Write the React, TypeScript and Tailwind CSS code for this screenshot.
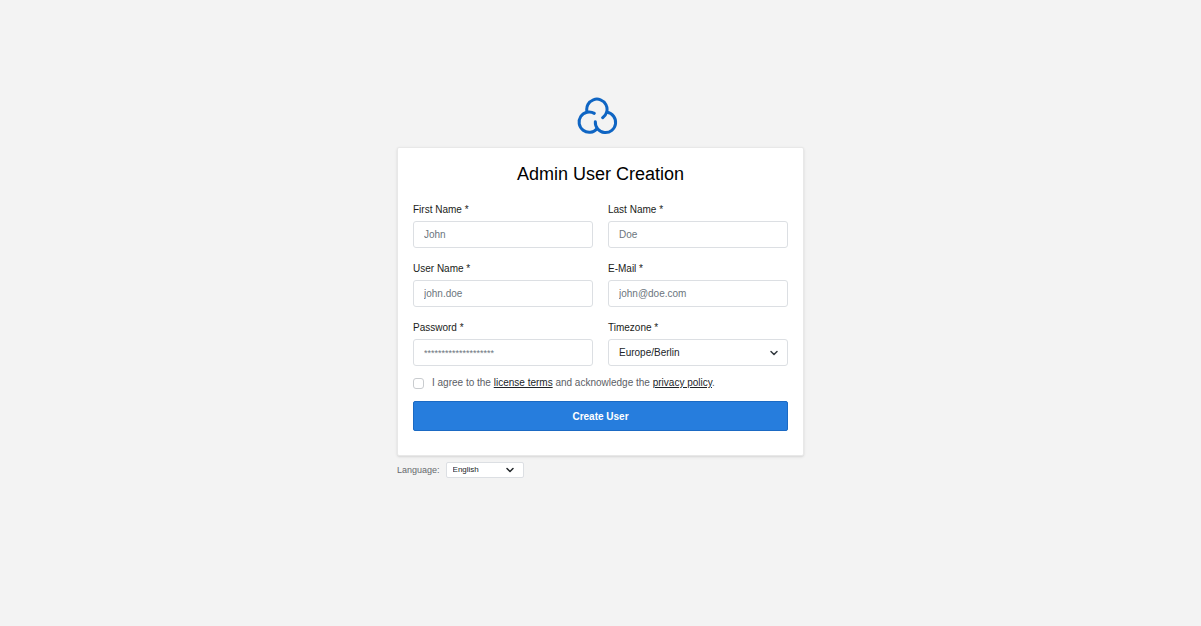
import type { InputHTMLAttributes } from 'react'
import { ChevronDown } from 'lucide-react'

const labelClass = 'mb-[3px] block text-[10px] leading-4 text-[#1a1c20]'
const controlClass =
  'block h-[27px] w-full rounded-[3px] border border-[#dcdfe3] bg-white px-[10px] text-[#212529] placeholder:text-[#6c757d] placeholder:opacity-100'

function Logo() {
  return (
    <svg viewBox="27 21 126 114" className="h-[38px] w-[42px]" fill="none" stroke="#0f65c3" strokeWidth="9" strokeLinecap="round" aria-label="Logo">
      <path d="M60 65 A30.5 30.5 0 1 1 107 83" />
      <path d="M82 70 A30.5 30.5 0 1 0 90 116" />
      <path d="M85 95 A30.5 30.5 0 1 0 120 67" />
    </svg>
  )
}

type FieldProps = InputHTMLAttributes<HTMLInputElement> & { id: string; label: string; textSize?: string }

function Field({ id, label, textSize = 'text-[10px]', ...rest }: FieldProps) {
  return (
    <div>
      <label htmlFor={id} className={labelClass}>{label} *</label>
      <input id={id} className={`${controlClass} ${textSize}`} {...rest} />
    </div>
  )
}

export default function App() {
  return (
    <main className="flex min-h-screen flex-col items-center bg-[#f3f3f3] px-4 pt-[97px] pb-8 font-['Liberation_Sans',Arial,sans-serif]">
      <div className="w-full max-w-[407px]">
        <div className="mb-3 flex justify-center pr-[7px]">
          <Logo />
        </div>
        <form className="rounded-xs border border-[#e8e8e8] bg-white px-[15px] pt-[13px] pb-6 shadow-sm" onSubmit={(e) => e.preventDefault()}>
          <h1 className="mb-[15px] text-center text-[18px] leading-[26px] text-black">Admin User Creation</h1>
          <div className="grid grid-cols-2 gap-x-[15px] gap-y-[13px]">
            <Field id="first-name" label="First Name" placeholder="John" />
            <Field id="last-name" label="Last Name" placeholder="Doe" />
            <Field id="user-name" label="User Name" placeholder="john.doe" />
            <Field id="email" label="E-Mail" type="email" placeholder="john@doe.com" />
            <Field id="password" label="Password" type="password" placeholder="********************" textSize="text-[9px]" />
            <div>
              <label htmlFor="timezone" className={labelClass}>Timezone *</label>
              <div className="relative">
                <select id="timezone" className={`${controlClass} appearance-none text-[10px]`} defaultValue="Europe/Berlin">
                  <option>Europe/Berlin</option>
                  <option>Europe/London</option>
                  <option>America/New_York</option>
                </select>
                <ChevronDown className="pointer-events-none absolute top-2 right-2 size-3 text-[#343a40]" strokeWidth={3} />
              </div>
            </div>
          </div>
          <div className="mt-[9px] flex items-center gap-2 text-[10px] leading-4 text-[#5c6066]">
            <input id="agree" type="checkbox" className="size-[11px] appearance-none rounded-[3px] border border-[#c9cccf] bg-white checked:bg-[#267ddd]" />
            <label htmlFor="agree">
              I agree to the <a href="#license" className="text-[#212529] underline">license terms</a> and acknowledge the{' '}
              <a href="#privacy" className="text-[#212529] underline">privacy policy</a>.
            </label>
          </div>
          <button type="submit" className="mt-[10px] block h-[30px] w-full rounded-xs border border-[#1b6ac4] bg-[#267ddd] text-[10px] font-bold text-white">
            Create User
          </button>
        </form>
        <div className="mt-[6px] flex items-center gap-[6px] text-[#66696d]">
          <label htmlFor="language" className="text-[9px] leading-4">Language:</label>
          <div className="relative">
            <select id="language" className="block h-4 w-[78px] appearance-none rounded-xs border border-[#dcdfe3] bg-white px-[6px] text-[8px] text-[#212529]" defaultValue="English">
              <option>English</option>
              <option>Deutsch</option>
            </select>
            <ChevronDown className="pointer-events-none absolute top-[2px] right-2 size-3 text-[#212529]" strokeWidth={3} />
          </div>
        </div>
      </div>
    </main>
  )
}
